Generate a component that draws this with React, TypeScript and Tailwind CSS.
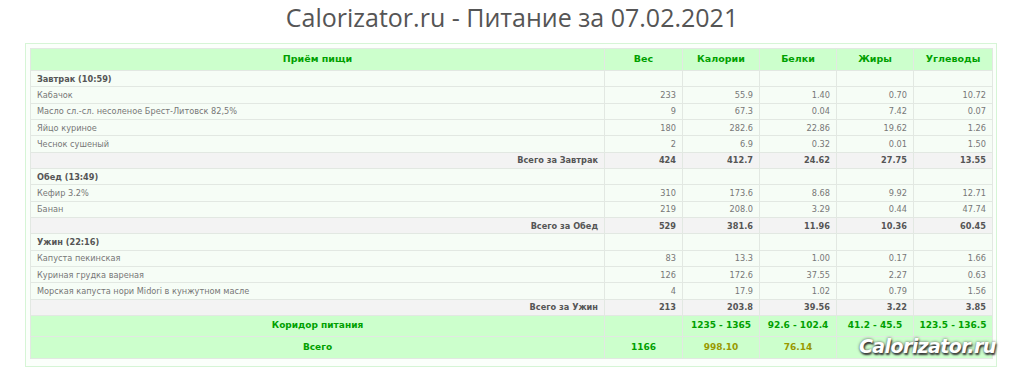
import React from 'react';

type Item = { name: string; w: string; kcal: string; p: string; f: string; c: string };
type Meal = { title: string; items: Item[]; total: string[] };

const meals: Meal[] = [
    {
        title: 'Завтрак (10:59)',
        items: [
            { name: 'Кабачок', w: '233', kcal: '55.9', p: '1.40', f: '0.70', c: '10.72' },
            { name: 'Масло сл.-сл. несоленое Брест-Литовск 82,5%', w: '9', kcal: '67.3', p: '0.04', f: '7.42', c: '0.07' },
            { name: 'Яйцо куриное', w: '180', kcal: '282.6', p: '22.86', f: '19.62', c: '1.26' },
            { name: 'Чеснок сушеный', w: '2', kcal: '6.9', p: '0.32', f: '0.01', c: '1.50' },
        ],
        total: ['Всего за Завтрак', '424', '412.7', '24.62', '27.75', '13.55'],
    },
    {
        title: 'Обед (13:49)',
        items: [
            { name: 'Кефир 3.2%', w: '310', kcal: '173.6', p: '8.68', f: '9.92', c: '12.71' },
            { name: 'Банан', w: '219', kcal: '208.0', p: '3.29', f: '0.44', c: '47.74' },
        ],
        total: ['Всего за Обед', '529', '381.6', '11.96', '10.36', '60.45'],
    },
    {
        title: 'Ужин (22:16)',
        items: [
            { name: 'Капуста пекинская', w: '83', kcal: '13.3', p: '1.00', f: '0.17', c: '1.66' },
            { name: 'Куриная грудка вареная', w: '126', kcal: '172.6', p: '37.55', f: '2.27', c: '0.63' },
            { name: 'Морская капуста нори Midori в кунжутном масле', w: '4', kcal: '17.9', p: '1.02', f: '0.79', c: '1.56' },
        ],
        total: ['Всего за Ужин', '213', '203.8', '39.56', '3.22', '3.85'],
    },
];

const td = 'border border-[#e2e8e2] px-[6px] py-0 h-[16.33px] leading-none';
const num = `${td} text-right`;
const th = 'border border-[#e2e8e2] h-[22px] text-center font-bold text-[9.5px] text-[#00a000]';
const gr = 'border border-[#e2e8e2] text-center';

const App = () => {
    return (
        <div className="w-[1024px] h-[368px] bg-white overflow-hidden relative" style={{ fontFamily: '"DejaVu Sans", Verdana, sans-serif' }}>
            <h1 className="h-[43px] pt-[1px] text-center text-[25px] leading-[32px] text-[#555]" style={{ fontFamily: '"Open Sans", sans-serif' }}>
                Calorizator.ru - Питание за 07.02.2021
            </h1>

            <div className="ml-[25px] w-[972px] border border-[#d6f5d6] bg-[#fbfffb] p-[4px] pb-[7px]">
                <table className="w-[962px] table-fixed border-collapse text-[8.2px] text-[#777]">
                    <colgroup>
                        <col className="w-[574px]" />
                        <col className="w-[78px]" />
                        <col className="w-[77px]" />
                        <col className="w-[77px]" />
                        <col className="w-[77px]" />
                        <col className="w-[79px]" />
                    </colgroup>
                    <thead>
                        <tr className="bg-[#ccffcc]">
                            <th className={th}>Приём пищи</th>
                            <th className={th}>Вес</th>
                            <th className={th}>Калории</th>
                            <th className={th}>Белки</th>
                            <th className={th}>Жиры</th>
                            <th className={th}>Углеводы</th>
                        </tr>
                    </thead>
                    <tbody>
                        {meals.map((meal) => (
                            <React.Fragment key={meal.title}>
                                <tr className="bg-[#f6fdf6]">
                                    <td className={`${td} font-bold text-[#555]`}>{meal.title}</td>
                                    <td className={td} />
                                    <td className={td} />
                                    <td className={td} />
                                    <td className={td} />
                                    <td className={td} />
                                </tr>
                                {meal.items.map((it) => (
                                    <tr key={it.name} className="bg-[#f6fdf6]">
                                        <td className={td}>{it.name}</td>
                                        <td className={num}>{it.w}</td>
                                        <td className={num}>{it.kcal}</td>
                                        <td className={num}>{it.p}</td>
                                        <td className={num}>{it.f}</td>
                                        <td className={num}>{it.c}</td>
                                    </tr>
                                ))}
                                <tr className="bg-[#f3f3f3] font-bold text-[#555]">
                                    {meal.total.map((v, i) => (
                                        <td key={i} className={num}>{v}</td>
                                    ))}
                                </tr>
                            </React.Fragment>
                        ))}
                        <tr className="bg-[#ccffcc] font-bold text-[#00a000] text-[9px]">
                            <td className={`${gr} h-[21px]`}>Коридор питания</td>
                            <td className={gr} />
                            <td className={gr}>1235 - 1365</td>
                            <td className={gr}>92.6 - 102.4</td>
                            <td className={gr}>41.2 - 45.5</td>
                            <td className={gr}>123.5 - 136.5</td>
                        </tr>
                        <tr className="bg-[#ccffcc] font-bold text-[#00a000] text-[9px]">
                            <td className={`${gr} h-[22px]`}>Всего</td>
                            <td className={gr}>1166</td>
                            <td className={`${gr} text-[#999900]`}>998.10</td>
                            <td className={`${gr} text-[#999900]`}>76.14</td>
                            <td className={gr} />
                            <td className={gr} />
                        </tr>
                    </tbody>
                </table>
            </div>

            <div
                className="absolute left-[859px] top-[332px] text-[19px] font-bold italic text-white tracking-[-0.6px]"
                style={{ fontFamily: '"DejaVu Sans", sans-serif', textShadow: '1px 2px 2px #333, 0 0 3px #555' }}
            >
                Calorizator.ru
            </div>
        </div>
    );
};

export default App;
